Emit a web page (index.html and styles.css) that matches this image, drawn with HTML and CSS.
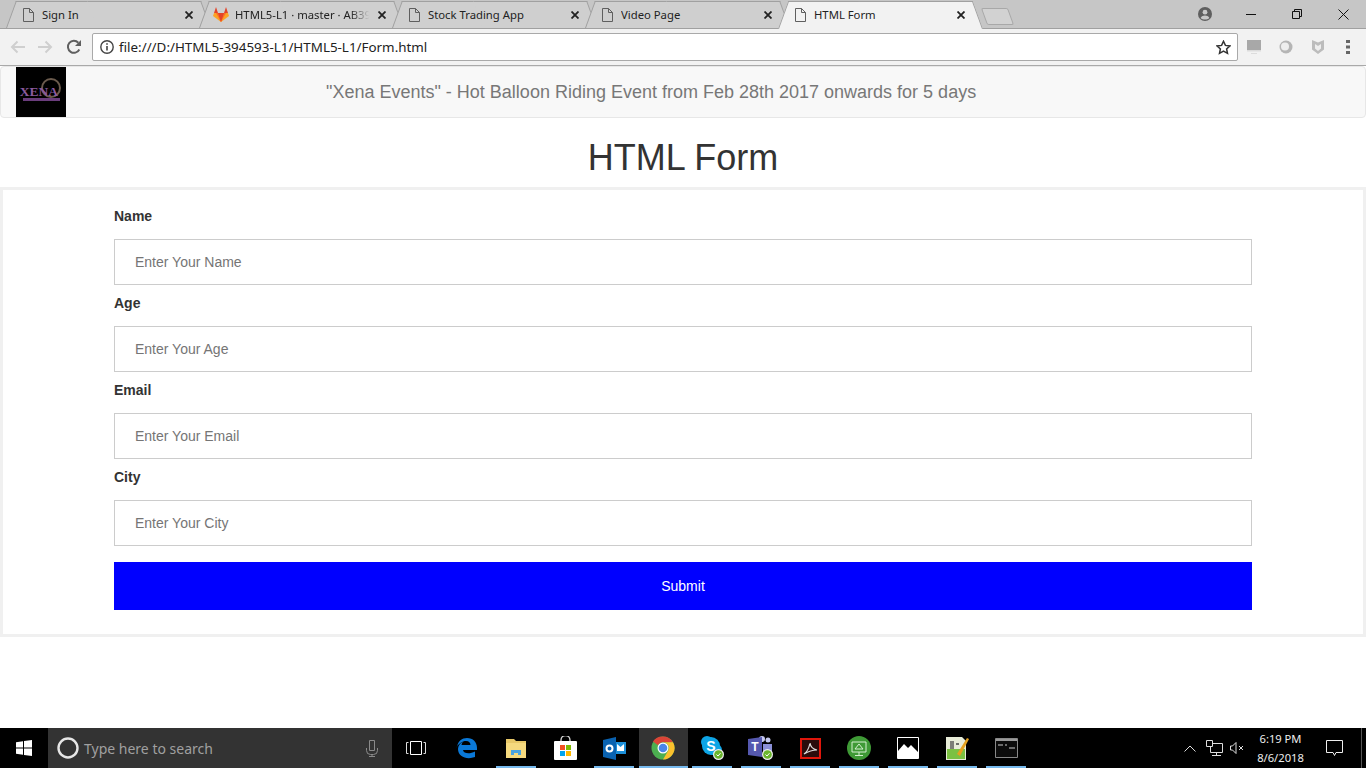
FILE: index.html
```html
<!DOCTYPE html>
<html lang="en">
<head>
    <meta charset="UTF-8">
    <meta name="viewport" content="width=device-width, initial-scale=1.0">
    <title>HTML Form</title>
    <link rel="stylesheet" href="styles.css">
</head>
<body>
<div class="tabstrip">
    <div class="tab">
        <span class="tab-icon"><svg width="11" height="14" viewBox="0 0 11 14"><path d="M.5.5h6l4 4v9H.5zM6.5.5v4h4" fill="none" stroke="#5f5f5f"/></svg></span>
        <span class="tab-title">Sign In</span>
        <svg class="tab-close" width="8" height="8" viewBox="0 0 8 8"><path d="M.5.5l7 7M7.5.5l-7 7" stroke="#222" stroke-width="1.8"/></svg>
    </div>
    <div class="tab">
        <span class="tab-icon"><svg width="16" height="15" viewBox="0 0 16 15"><path d="M8 15L0 9l1-3h14l1 3z" fill="#fca326"/><path d="M8 15L3 6h10z" fill="#fc6d26"/><path d="M8 15L5 6h6z" fill="#e24329"/><path d="M1 6l2-6 2 6zM15 6l-2-6-2 6z" fill="#e24329"/></svg></span>
        <span class="tab-title tab-title-fade">HTML5-L1 · master · AB394593-L1</span>
        <svg class="tab-close" width="8" height="8" viewBox="0 0 8 8"><path d="M.5.5l7 7M7.5.5l-7 7" stroke="#222" stroke-width="1.8"/></svg>
    </div>
    <div class="tab">
        <span class="tab-icon"><svg width="11" height="14" viewBox="0 0 11 14"><path d="M.5.5h6l4 4v9H.5zM6.5.5v4h4" fill="none" stroke="#5f5f5f"/></svg></span>
        <span class="tab-title">Stock Trading App</span>
        <svg class="tab-close" width="8" height="8" viewBox="0 0 8 8"><path d="M.5.5l7 7M7.5.5l-7 7" stroke="#222" stroke-width="1.8"/></svg>
    </div>
    <div class="tab">
        <span class="tab-icon"><svg width="11" height="14" viewBox="0 0 11 14"><path d="M.5.5h6l4 4v9H.5zM6.5.5v4h4" fill="none" stroke="#5f5f5f"/></svg></span>
        <span class="tab-title">Video Page</span>
        <svg class="tab-close" width="8" height="8" viewBox="0 0 8 8"><path d="M.5.5l7 7M7.5.5l-7 7" stroke="#222" stroke-width="1.8"/></svg>
    </div>
    <div class="tab tab-active">
        <span class="tab-icon"><svg width="11" height="14" viewBox="0 0 11 14"><path d="M.5.5h6l4 4v9H.5zM6.5.5v4h4" fill="none" stroke="#5f5f5f"/></svg></span>
        <span class="tab-title">HTML Form</span>
        <svg class="tab-close" width="8" height="8" viewBox="0 0 8 8"><path d="M.5.5l7 7M7.5.5l-7 7" stroke="#222" stroke-width="1.8"/></svg>
    </div>
    <div class="newtab"></div>
    <div class="window-btns">
        <svg class="avatar" width="14" height="14" viewBox="0 0 14 14"><circle cx="7" cy="7" r="7" fill="#5f5f5f"/><circle cx="7" cy="5.2" r="2.4" fill="#c8c8c8"/><path d="M2.6 11c1-2 2.6-2.6 4.4-2.6s3.400.6 4.400 2.600c-2.400 2-6.400 2-8.800 0z" fill="#c8c8c8"/></svg>
        <span class="win-btn"><svg width="10" height="10" viewBox="0 0 10 10"><path d="M0 5.500h10" stroke="#111"/></svg></span>
        <span class="win-btn"><svg width="10" height="10" viewBox="0 0 10 10"><path d="M.5 2.500h7v7h-7zM2.500 2.500v-2h7v7h-2" fill="none" stroke="#111"/></svg></span>
        <span class="win-btn"><svg width="11" height="11" viewBox="0 0 11 11"><path d="M.5.500l10 10M10.500.500l-10 10" stroke="#111"/></svg></span>
    </div>
</div>

<div class="toolbar">
    <svg class="nav-icon" width="16" height="14" viewBox="0 0 16 14"><path d="M15 7H2M7.500 1.500L2 7l5.500 5.500" fill="none" stroke="#cfcfcf" stroke-width="2"/></svg>
    <svg class="nav-icon" width="16" height="14" viewBox="0 0 16 14"><path d="M1 7h13M8.500 1.500L14 7l-5.500 5.500" fill="none" stroke="#cfcfcf" stroke-width="2"/></svg>
    <svg class="nav-icon nav-reload" width="16" height="16" viewBox="0 0 16 16"><path d="M13.300 10.500A6 6 0 1 1 12.300 3.700" fill="none" stroke="#5f5f5f" stroke-width="2"/><path d="M15 1v6H9z" fill="#5f5f5f"/></svg>
    <div class="address">
        <svg width="14" height="14" viewBox="0 0 14 14"><circle cx="7" cy="7" r="6.200" fill="none" stroke="#444" stroke-width="1.400"/><path d="M7 6v4.500M7 3.200v1.600" stroke="#444" stroke-width="1.600"/></svg>
        <span class="url">file:///D:/HTML5-394593-L1/HTML5-L1/Form.html</span>
        <svg class="star" width="15" height="15" viewBox="0 0 15 15"><path d="M7.500 1.300l1.900 4.100 4.500.5-3.300 3 .9 4.500-4-2.300-4 2.300.9-4.500-3.300-3 4.500-.5z" fill="none" stroke="#333" stroke-width="1.500"/></svg>
    </div>
    <div class="ext-icons">
        <svg width="16" height="16" viewBox="0 0 16 16"><path d="M1 1h14v10H1z" fill="#a8a8a8"/><path d="M1 11h14v1.500H1zM5 14h6v1H5z" fill="#dcdcdc"/></svg>
        <svg width="16" height="16" viewBox="0 0 16 16"><circle cx="8" cy="8" r="6.500" fill="#b5b5b5"/><circle cx="7" cy="7.500" r="4" fill="#eee"/></svg>
        <svg width="16" height="16" viewBox="0 0 16 16"><path d="M2 1l6 2.500L14 1v9.500L8 15l-6-4.500z" fill="#bcbcbc"/><path d="M5 5l3 2 3-2v4.500L8 12 5 9.500z" fill="#eee"/></svg>
        <svg class="ext-menu" width="4" height="14" viewBox="0 0 4 14"><path d="M0 0h4v3H0zM0 5.500h4v3H0zM0 11h4v3H0z" fill="#666"/></svg>
    </div>
</div>

<div class="page">
    <nav class="navbar">
        <div class="logo">
            <svg width="50" height="50" viewBox="0 0 50 50">
                <circle cx="35" cy="21" r="9" fill="none" stroke="#6b5b4d" stroke-width="2"/>
                <text x="23" y="29" text-anchor="middle" class="logo-text">XENA</text>
                <path d="M7 31h37v3H7z" fill="#6a3d7c"/>
            </svg>
        </div>
        <p class="navbar-text">"Xena Events" - Hot Balloon Riding Event from Feb 28th 2017 onwards for 5 days</p>
    </nav>

    <h1>HTML Form</h1>

    <form class="form-box">
        <div class="form-group">
            <label for="name">Name</label>
            <input id="name" type="text" placeholder="Enter Your Name">
        </div>
        <div class="form-group">
            <label for="age">Age</label>
            <input id="age" type="text" placeholder="Enter Your Age">
        </div>
        <div class="form-group">
            <label for="email">Email</label>
            <input id="email" type="text" placeholder="Enter Your Email">
        </div>
        <div class="form-group">
            <label for="city">City</label>
            <input id="city" type="text" placeholder="Enter Your City">
        </div>
        <button type="button" class="submit">Submit</button>
    </form>
</div>

<div class="taskbar">
    <div class="start">
        <svg width="16" height="16" viewBox="0 0 16 16"><path d="M0 2.300l7-1v6.300H0zM8 1.100L16 0v7.600H8zM0 8.500h7v6.300l-7-1zM8 8.500h8V16l-8-1.100z" fill="#fff"/></svg>
    </div>
    <div class="search">
        <svg width="22" height="22" viewBox="0 0 22 22"><circle cx="11" cy="11" r="9.500" fill="none" stroke="#e6e6e6" stroke-width="2.400"/></svg>
        <span class="search-text">Type here to search</span>
        <svg class="mic" width="12" height="17" viewBox="0 0 12 17"><path d="M3.500.5h5v10h-5zM.5 8v2.500a4 4 0 0 0 4 4h3a4 4 0 0 0 4-4V8M6 14.500v2M3 16.500h6" fill="none" stroke="#8a8a8a"/></svg>
    </div>
    <div class="task-item task-view">
        <svg width="20" height="14" viewBox="0 0 20 14"><path d="M4.500.5h11v13h-11z" fill="none" stroke="#fff"/><path d="M2.500 1.500H.5v11h2M17.500 1.500h2v11h-2" fill="none" stroke="#ddd"/></svg>
    </div>
    <div class="task-item">
        <svg width="22" height="22" viewBox="0 0 22 22"><path d="M1 10C2 4 6 1 11 1c6 0 10 4 10 10v2H7c.5 3.500 6.500 4.500 12 1.500v5.500c-8 3-17 0-17-8 0-3 2-6 5-7-1 1-1.500 2-1.500 3h9c0-2-1.500-4-4.500-4-3.500 0-7.500 2.500-9.500 6.500z" fill="#0a78d7"/></svg>
    </div>
    <div class="task-item running">
        <svg width="22" height="20" viewBox="0 0 22 20"><path d="M1 1h8l2 2h10v3H1z" fill="#e8c868"/><path d="M1 5h20v15H1z" fill="#f5d97e"/><path d="M6 17v-5h10v5h-3v-2H9v2z" fill="#4aa3df"/></svg>
    </div>
    <div class="task-item">
        <svg width="23" height="24" viewBox="0 0 23 24"><path d="M7 6V4a4.500 4.500 0 0 1 9 0v2" fill="none" stroke="#ddd" stroke-width="1.300"/><rect y="5" width="23" height="19" rx="1" fill="#fff"/><path d="M6 9h5v5H6z" fill="#f25022"/><path d="M12 9h5v5h-5z" fill="#7fba00"/><path d="M6 15h5v5H6z" fill="#00a4ef"/><path d="M12 15h5v5h-5z" fill="#ffb900"/></svg>
    </div>
    <div class="task-item running">
        <svg width="23" height="23" viewBox="0 0 23 23"><path d="M12 5h11v12H12z" fill="#1c8fd8"/><path d="M14 7l3.500 3L21 7v7h-7z" fill="#fff"/><path d="M0 3l13-3v23L0 20z" fill="#0a62b0"/><circle cx="6.500" cy="11.500" r="3" fill="none" stroke="#fff" stroke-width="2"/></svg>
    </div>
    <div class="task-item running task-active">
        <svg width="24" height="24" viewBox="0 0 24 24"><circle cx="12" cy="12" r="11.500" fill="#4caf50"/><path d="M12 .500a11.500 11.500 0 0 1 10 5.750H12a5.750 5.750 0 0 0-5 2.900L2 5.500A11.500 11.500 0 0 1 12 .500z" fill="#db4437"/><path d="M22 6.250A11.500 11.500 0 0 1 12 23.500L17 14.900a5.750 5.750 0 0 0-5-8.650z" fill="#fbc02d"/><circle cx="12" cy="12" r="5.500" fill="#fff"/><circle cx="12" cy="12" r="4.300" fill="#4a86e8"/></svg>
    </div>
    <div class="task-item running">
        <svg width="26" height="26" viewBox="0 0 26 26"><circle cx="8" cy="7" r="6" fill="#0ea5e6"/><circle cx="17" cy="15" r="6" fill="#0ea5e6"/><circle cx="12" cy="11" r="9" fill="#0ea5e6"/><text x="12" y="16" text-anchor="middle" class="skype-s">S</text><circle cx="19.500" cy="19.500" r="5.500" fill="#eee"/><circle cx="19.500" cy="19.500" r="4.300" fill="#6bb52d"/><path d="M17.500 19.500l1.500 1.500 2.500-2.800" fill="none" stroke="#fff"/></svg>
    </div>
    <div class="task-item running">
        <svg width="26" height="26" viewBox="0 0 26 26"><circle cx="20" cy="5" r="2.500" fill="#c5c9f0"/><circle cx="14" cy="4" r="3" fill="#c5c9f0"/><path d="M15 9h9v8h-9z" fill="#8b90d8"/><path d="M0 4l14-2v20L0 20z" fill="#5558af"/><text x="7" y="16" text-anchor="middle" class="teams-t">T</text><circle cx="19.500" cy="19.500" r="5.500" fill="#eee"/><circle cx="19.500" cy="19.500" r="4.300" fill="#6bb52d"/><path d="M17.500 19.500l1.500 1.500 2.500-2.800" fill="none" stroke="#fff"/></svg>
    </div>
    <div class="task-item running">
        <svg width="21" height="21" viewBox="0 0 21 21"><path d="M1 1h19v19H1z" fill="#2a0c0c" stroke="#e0160b" stroke-width="2"/><path d="M4 16c3-2 5-6 6-11 .5 4 2.500 6 7 7-5 0-8 1-13 4z" fill="none" stroke="#ddd" stroke-width="1.200"/></svg>
    </div>
    <div class="task-item running">
        <svg width="24" height="24" viewBox="0 0 24 24"><circle cx="12" cy="12" r="12" fill="#3f9a36"/><path d="M5 6h14v10H5zM12 16v3M8 19.500h8M12 8l-4 5h8z" fill="none" stroke="#d5f0d0"/></svg>
    </div>
    <div class="task-item running">
        <svg width="22" height="22" viewBox="0 0 22 22"><path d="M.5.500h21v21H.5z" fill="#000" stroke="#fff"/><path d="M1 21v-7l6-7 4 4 3-3 7 7v6z" fill="#fff"/></svg>
    </div>
    <div class="task-item running">
        <svg width="23" height="24" viewBox="0 0 23 24"><path d="M0 1h16l4 4v19H0z" fill="#e8ecd8"/><path d="M1 13h18v10H1z" fill="#7cc142"/><path d="M5 5v8M7 5v8M10 8h3" stroke="#444" stroke-width="1.300"/><path d="M11 18L21 2l2 1-9 17z" fill="#e6a21f"/></svg>
    </div>
    <div class="task-item running">
        <svg width="23" height="20" viewBox="0 0 23 20"><path d="M.5.500h22v19H.5z" fill="#0c0c0c" stroke="#888"/><path d="M1 1h21v2H1z" fill="#999"/><path d="M3 7h5M10 7h2M14 10h6" stroke="#ccc"/></svg>
    </div>
    <div class="tray">
        <svg width="12" height="7" viewBox="0 0 12 7"><path d="M.5 6.500L6 1l5.500 5.500" fill="none" stroke="#ddd"/></svg>
        <svg width="17" height="16" viewBox="0 0 17 16"><path d="M4.500 3.500h12v9h-12zM10.500 12.500v3M6 15.500h9" fill="none" stroke="#ddd"/><path d="M.5.500h6v6h-6z" fill="#000" stroke="#ddd"/></svg>
        <svg class="volume" width="15" height="12" viewBox="0 0 15 12"><path d="M.5 4v4h2l3.500 3.500V.5L2.500 4zM9 4l4 4M13 4l-4 4" fill="none" stroke="#ddd"/></svg>
        <div class="clock"><div>6:19 PM</div><div>8/6/2018</div></div>
        <svg class="notify" width="17" height="16" viewBox="0 0 17 16"><path d="M.5.500h16v12H10l-1.500 3-1.500-3H.5z" fill="none" stroke="#eee"/></svg>
        <div class="show-desktop"></div>
    </div>
</div>
</body>
</html>
```

FILE: styles.css
```css
* {
    margin: 0;
    padding: 0;
    box-sizing: border-box;
}

html, body {
    width: 100%;
    height: 100%;
    overflow: hidden;
}

body {
    display: flex;
    flex-direction: column;
    font-family: "Liberation Sans", Arial, sans-serif;
    color: #333;
    background: #fff;
}

/* browser tabs */
.tabstrip {
    display: flex;
    height: 29px;
    flex-shrink: 0;
    padding: 1px 0 0 6px;
    background: #c6c6c6;
    border-bottom: 1px solid #a0a0a0;
    font-family: "Noto Sans", sans-serif;
    font-size: 11.3px;
}

.tab {
    position: relative;
    z-index: 0;
    display: flex;
    align-items: center;
    width: 205px;
    height: 27px;
    margin-right: -12px;
    padding: 0 18px 0 14px;
    color: #222;
}

.tab::before,
.tab::after {
    content: "";
    position: absolute;
    z-index: -1;
    top: 0;
    bottom: 0;
    width: 55%;
    background: #cfcfcf;
    border-top: 1px solid #a0a0a0;
}

.tab::before {
    left: 0;
    border-left: 1px solid #a0a0a0;
    transform: skewX(-20deg);
    transform-origin: bottom left;
}

.tab::after {
    right: 0;
    border-right: 1px solid #a0a0a0;
    transform: skewX(20deg);
    transform-origin: bottom right;
}

.tab-active {
    z-index: 1;
    height: 28px;
    padding-bottom: 1px;
}

.tab-active::before,
.tab-active::after {
    background: #f2f2f2;
}

.tab-icon {
    display: flex;
    justify-content: center;
    width: 16px;
    margin-right: 6px;
}

.tab-title {
    flex: 1;
    overflow: hidden;
    white-space: nowrap;
}

.tab-title-fade {
    -webkit-mask-image: linear-gradient(to right, #000 85%, transparent 99%);
    mask-image: linear-gradient(to right, #000 85%, transparent 99%);
}

.tab-close {
    flex-shrink: 0;
    margin-left: 7px;
}

.newtab {
    width: 27px;
    height: 17px;
    margin: 7px 0 0 13px;
    background: #d2d2d2;
    border: 1px solid #a8a8a8;
    border-radius: 2px;
    transform: skewX(20deg);
}

.window-btns {
    display: flex;
    align-items: center;
    height: 26px;
    margin-left: auto;
}

.avatar {
    margin-right: 16px;
}

.win-btn {
    display: flex;
    justify-content: center;
    width: 46px;
}

/* address row */
.toolbar {
    display: flex;
    align-items: center;
    height: 37px;
    flex-shrink: 0;
    padding-left: 10px;
    background: #f2f2f2;
    border-bottom: 1px solid #a9a9a9;
}

.nav-icon {
    margin-right: 11px;
}

.nav-reload {
    margin-left: 2px;
    margin-right: 10px;
}

.address {
    display: flex;
    align-items: center;
    width: 1146px;
    height: 28px;
    padding: 0 6px 0 7px;
    background: #fff;
    border: 1px solid #a9a9a9;
    border-radius: 2px;
}

.url {
    flex: 1;
    margin-left: 5px;
    font-family: "Noto Sans", sans-serif;
    font-size: 13.4px;
    color: #222;
}

.ext-icons {
    display: flex;
    align-items: center;
    gap: 16px;
    margin-left: 8px;
}

.ext-menu {
    margin-left: 4px;
}

/* page content */
.page {
    flex: 1;
}

.navbar {
    display: flex;
    align-items: center;
    height: 52px;
    padding-left: 15px;
    background: #f8f8f8;
    border: 1px solid #e7e7e7;
    border-radius: 4px;
}

.logo {
    width: 50px;
    height: 50px;
    background: #000;
}

.logo svg {
    display: block;
}

.logo-text {
    font-family: "Liberation Serif", serif;
    font-size: 13.5px;
    font-weight: bold;
    fill: #8a5a9e;
}

.navbar-text {
    margin-left: 260px;
    font-size: 18px;
    color: #777;
    white-space: nowrap;
}

h1 {
    height: 69px;
    font-size: 36px;
    font-weight: 500;
    line-height: 79px;
    text-align: center;
}

.form-box {
    height: 450px;
    padding: 16px 111px 0;
    border: 3px solid #f0f0f0;
}

.form-group {
    margin-bottom: 8px;
}

label {
    display: block;
    height: 20px;
    margin-bottom: 13px;
    font-size: 14px;
    font-weight: bold;
    line-height: 20px;
}

input {
    display: block;
    width: 100%;
    height: 46px;
    padding: 0 20px;
    font-family: inherit;
    font-size: 14px;
    border: 1px solid #ccc;
}

input::placeholder {
    color: #757575;
}

.submit {
    display: block;
    width: 100%;
    height: 48px;
    margin-top: 16px;
    font-family: inherit;
    font-size: 14px;
    color: #fff;
    background: #00f;
    border: none;
}

/* windows taskbar */
.taskbar {
    display: flex;
    height: 40px;
    flex-shrink: 0;
    background: #000;
}

.start {
    display: flex;
    align-items: center;
    justify-content: center;
    width: 48px;
}

.search {
    display: flex;
    align-items: center;
    width: 344px;
    margin-right: 1.5px;
    padding: 0 14px 0 9px;
    background: #333;
}

.search-text {
    flex: 1;
    margin-left: 5px;
    font-family: "Noto Sans", sans-serif;
    font-size: 14px;
    color: #a0a0a0;
}

.task-item {
    display: flex;
    align-items: center;
    justify-content: center;
    width: 49px;
}

.task-view {
    padding-right: 4px;
}

.running {
    background: linear-gradient(#76b9ed, #76b9ed) center bottom / 40px 2px no-repeat;
}

.task-active {
    background: linear-gradient(#76b9ed, #76b9ed) center bottom / 100% 2px no-repeat, #333;
}

.skype-s {
    font-family: "Liberation Sans", sans-serif;
    font-size: 14px;
    font-weight: bold;
    fill: #fff;
}

.teams-t {
    font-family: "Liberation Sans", sans-serif;
    font-size: 12px;
    font-weight: bold;
    fill: #fff;
}

.tray {
    display: flex;
    align-items: center;
    flex: 1;
    padding-left: 153px;
    gap: 10px;
    color: #eee;
}

.volume {
    margin-left: -3px;
}

.clock {
    width: 48px;
    margin-left: 2px;
    font-family: "Noto Sans", sans-serif;
    font-size: 11.2px;
    line-height: 19px;
    text-align: center;
}

.notify {
    margin-left: 11px;
}

.show-desktop {
    align-self: stretch;
    width: 5px;
    margin-left: auto;
    border-left: 1px solid #555;
}
```
